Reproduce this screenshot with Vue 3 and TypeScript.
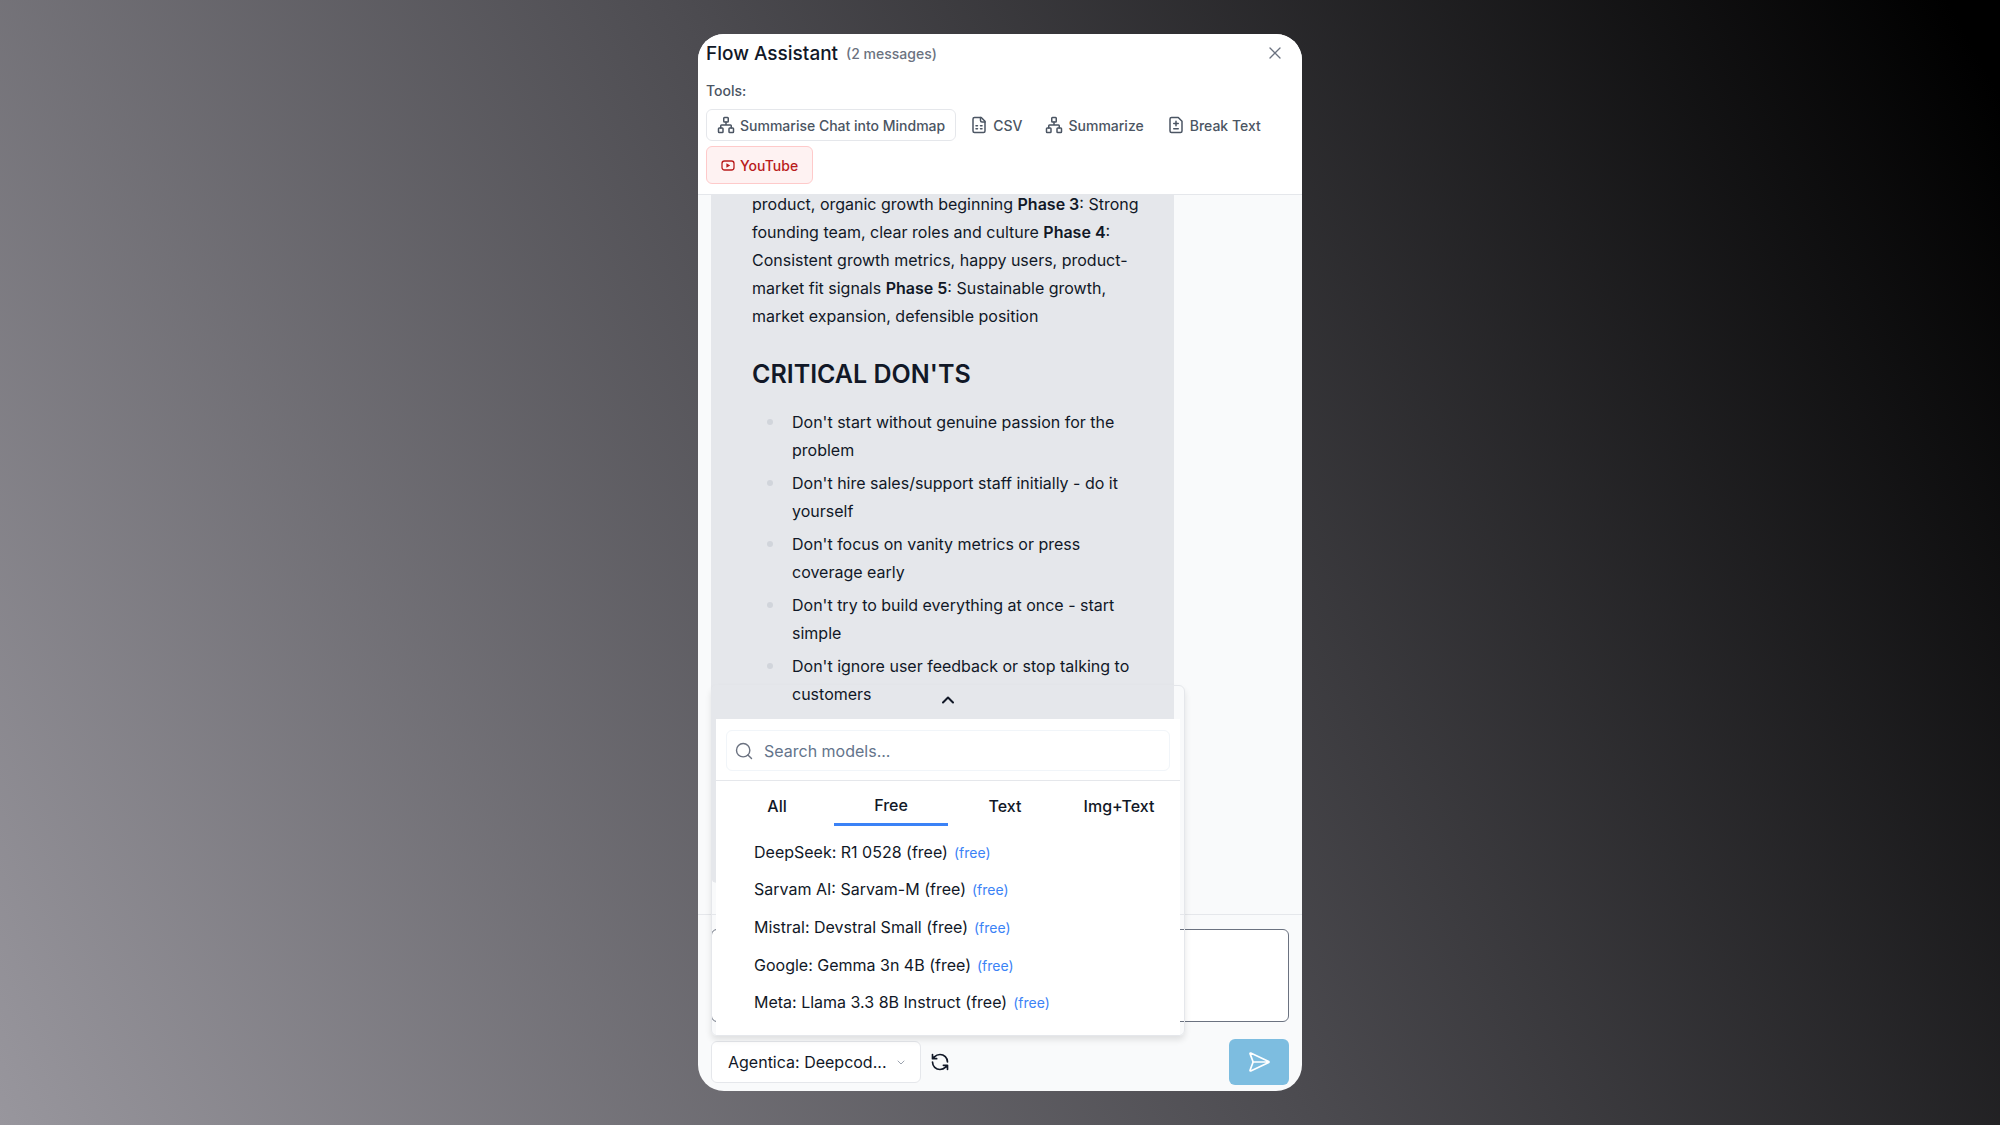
<script setup lang="ts">
import { ref } from 'vue'

interface Model {
  name: string
  tag: string
}

const tabs: string[] = ['All', 'Free', 'Text', 'Img+Text']
const activeTab = ref<string>('Free')
const search = ref<string>('')
const draft = ref<string>('')

const models: Model[] = [
  { name: 'DeepSeek: R1 0528 (free)', tag: '(free)' },
  { name: 'Sarvam AI: Sarvam-M (free)', tag: '(free)' },
  { name: 'Mistral: Devstral Small (free)', tag: '(free)' },
  { name: 'Google: Gemma 3n 4B (free)', tag: '(free)' },
  { name: 'Meta: Llama 3.3 8B Instruct (free)', tag: '(free)' },
]

const donts: string[] = [
  "Don't start without genuine passion for the problem",
  "Don't hire sales/support staff initially - do it yourself",
  "Don't focus on vanity metrics or press coverage early",
  "Don't try to build everything at once - start simple",
  "Don't ignore user feedback or stop talking to customers",
]
</script>

<template>
  <main class="stage">
    <section class="panel" aria-label="Flow Assistant">
      <header class="head">
        <div class="title-row">
          <h1>Flow Assistant</h1>
          <span class="count">(2 messages)</span>
          <button class="close" type="button" aria-label="Close">
            <svg viewBox="0 0 12 12" width="12" height="12"><path d="M1 1l10 10M11 1L1 11" /></svg>
          </button>
        </div>
        <p class="tools-label">Tools:</p>
        <div class="tools">
          <button class="tool outlined" type="button">
            <svg viewBox="0 0 24 24" width="18" height="18">
              <rect x="16" y="16" width="6" height="6" rx="1" /><rect x="2" y="16" width="6" height="6" rx="1" />
              <rect x="9" y="2" width="6" height="6" rx="1" />
              <path d="M5 16v-3a1 1 0 0 1 1-1h12a1 1 0 0 1 1 1v3M12 12V8" />
            </svg>
            Summarise Chat into Mindmap
          </button>
          <button class="tool" type="button">
            <svg viewBox="0 0 24 24" width="18" height="18">
              <path d="M15 2H6a2 2 0 0 0-2 2v16a2 2 0 0 0 2 2h12a2 2 0 0 0 2-2V7Z" />
              <path d="M14 2v4a2 2 0 0 0 2 2h4M8 13h2M14 13h2M8 17h2M14 17h2" />
            </svg>
            CSV
          </button>
          <button class="tool" type="button">
            <svg viewBox="0 0 24 24" width="18" height="18">
              <rect x="16" y="16" width="6" height="6" rx="1" /><rect x="2" y="16" width="6" height="6" rx="1" />
              <rect x="9" y="2" width="6" height="6" rx="1" />
              <path d="M5 16v-3a1 1 0 0 1 1-1h12a1 1 0 0 1 1 1v3M12 12V8" />
            </svg>
            Summarize
          </button>
          <button class="tool" type="button">
            <svg viewBox="0 0 24 24" width="18" height="18">
              <path d="M15 2H6a2 2 0 0 0-2 2v16a2 2 0 0 0 2 2h12a2 2 0 0 0 2-2V7Z" />
              <path d="M9 10h6M12 13V7M9 17h6" />
            </svg>
            Break Text
          </button>
          <button class="tool youtube" type="button">
            <svg viewBox="0 0 14 14" width="14" height="14">
              <rect x="1" y="3" width="12" height="9" rx="2.5" /><path class="solid" d="M5.4 5.2v4.6L9.2 7.5z" />
            </svg>
            YouTube
          </button>
        </div>
      </header>

      <div class="messages">
        <article class="bubble">
          <p>
            product, organic growth beginning <strong>Phase 3</strong>: Strong founding team, clear roles and culture
            <strong>Phase 4</strong>: Consistent growth metrics, happy users, product-market fit signals
            <strong>Phase 5</strong>: Sustainable growth, market expansion, defensible position
          </p>
          <h2>CRITICAL DON'TS</h2>
          <ul>
            <li v-for="item in donts" :key="item">{{ item }}</li>
          </ul>
        </article>
      </div>

      <footer class="composer">
        <textarea v-model="draft" aria-label="Message"></textarea>
        <div class="controls">
          <div class="picker">
            <select aria-label="Model">
              <option>Agentica: Deepcod...</option>
            </select>
            <svg viewBox="0 0 8 8" width="8" height="8"><path d="M1 3l3 3 3-3" /></svg>
          </div>
          <button class="refresh" type="button" aria-label="Refresh models">
            <svg viewBox="0 0 24 24" width="20" height="20">
              <path d="M21 12a9 9 0 0 0-9-9 9.75 9.75 0 0 0-6.74 2.74L3 8M3 3v5h5" />
              <path d="M3 12a9 9 0 0 0 9 9 9.75 9.75 0 0 0 6.74-2.74L21 16M16 16h5v5" />
            </svg>
          </button>
          <button class="send" type="button" aria-label="Send">
            <svg viewBox="0 0 24 24" width="24" height="24">
              <path d="M3.714 3.048a.498.498 0 0 0-.683.627l2.843 7.627a2 2 0 0 1 0 1.396l-2.842 7.627a.498.498 0 0 0 .682.627l18-8.5a.5.5 0 0 0 0-.904zM6 12h16" />
            </svg>
          </button>
        </div>

        <div class="menu">
          <button class="scroll-up" type="button" aria-label="Scroll up">
            <svg viewBox="0 0 12 8" width="12" height="8"><path d="M1 6.5l5-5 5 5" /></svg>
          </button>
          <div class="menu-body">
            <div class="search-wrap">
              <label class="search">
                <svg viewBox="0 0 24 24" width="20" height="20"><circle cx="11" cy="11" r="8" /><path d="M21 21l-4.3-4.3" /></svg>
                <input v-model="search" type="text" placeholder="Search models..." aria-label="Search models" />
              </label>
            </div>
            <div class="tabs" role="tablist">
              <button
                v-for="tab in tabs"
                :key="tab"
                type="button"
                role="tab"
                :aria-selected="tab === activeTab"
                :class="{ active: tab === activeTab }"
                @click="activeTab = tab"
              >{{ tab }}</button>
            </div>
            <ul class="models">
              <li v-for="model in models" :key="model.name">
                <button type="button">{{ model.name }}<span>{{ model.tag }}</span></button>
              </li>
            </ul>
          </div>
        </div>
      </footer>
    </section>
  </main>
</template>

<style>
body {
  margin: 0;
}
</style>

<style scoped>
* {
  box-sizing: border-box;
}
.stage {
  display: flex;
  justify-content: center;
  min-height: 100vh;
  padding: 34px 16px;
  background: linear-gradient(61deg, #98969d 0%, #4c4b50 50%, #000 98%);
  color: #111827;
  font-family: Inter, "Liberation Sans", sans-serif;
}
button,
input,
select,
textarea {
  margin: 0;
  padding: 0;
  border: 0;
  background: none;
  color: inherit;
  font: inherit;
}
svg {
  flex: none;
  fill: none;
  stroke: currentColor;
  stroke-width: 2;
  stroke-linecap: round;
  stroke-linejoin: round;
}
.panel {
  display: flex;
  flex-direction: column;
  width: 100%;
  max-width: 604px;
  border-radius: 26px;
  background: #f9fafb;
  overflow: hidden;
}
.head {
  padding: 7px 8px 10px;
  border-bottom: 1px solid #e5e7eb;
  background: #fff;
}
.title-row {
  display: flex;
  align-items: center;
  gap: 8px;
  height: 24px;
  padding-right: 12px;
}
h1 {
  margin: 0;
  font-size: 19px;
  font-weight: 500;
}
.count {
  color: #6b7280;
  font-size: 14px;
  font-weight: 500;
}
.close {
  display: flex;
  margin-left: auto;
  padding: 1px;
  color: #6b7280;
}
.close svg {
  stroke-width: 1.3;
}
.tools-label {
  margin: 15px 0 8px;
  color: #4b5563;
  font-size: 14px;
  font-weight: 500;
  line-height: 21px;
}
.tools {
  display: flex;
  flex-wrap: wrap;
  gap: 5px;
}
.tool {
  display: flex;
  align-items: center;
  gap: 5px;
  height: 32px;
  padding: 0 8px;
  border: 1px solid transparent;
  border-radius: 6px;
  color: #4b5563;
  font-size: 14px;
  font-weight: 500;
}
.outlined {
  padding: 0 10px;
  border-color: #e5e7eb;
}
.youtube {
  height: 38px;
  padding: 0 14px;
  border-color: #fecaca;
  background: #fef2f2;
  color: #b91c1c;
}
.youtube svg {
  stroke-width: 1.3;
}
.youtube .solid {
  fill: currentColor;
  stroke: none;
}
.messages {
  flex: 1;
  padding: 0 128px 31px 13px;
}
.bubble {
  display: flow-root;
  height: 100%;
  padding: 0 20px 0 41px;
  border-radius: 0 0 6px 6px;
  background: #e5e7eb;
  font-size: 16px;
  line-height: 28px;
}
.bubble p {
  margin: -5px 0 0;
}
strong {
  font-weight: 600;
}
h2 {
  margin: 28px 0 18px;
  font-size: 25px;
  font-weight: 600;
  line-height: 32px;
}
.bubble ul {
  display: flex;
  flex-direction: column;
  gap: 5px;
  margin: 0;
  padding: 0 0 0 15px;
}
.bubble li {
  display: flex;
  gap: 19px;
}
.bubble li::before {
  content: "";
  flex: none;
  width: 6px;
  height: 6px;
  margin-top: 11px;
  border-radius: 50%;
  background: #d1d5db;
}
.composer {
  position: relative;
  padding: 14px 13px 6px;
  border-top: 1px solid #e5e7eb;
}
textarea {
  display: block;
  width: 100%;
  height: 93px;
  border: 1px solid #6b7280;
  border-radius: 6px;
  background: #fff;
  resize: none;
}
.controls {
  display: flex;
  align-items: center;
  margin-top: 17px;
}
.picker {
  position: relative;
  display: flex;
  align-items: center;
}
select {
  width: 210px;
  height: 42px;
  padding: 0 16px;
  border: 1px solid #e5e7eb;
  border-radius: 6px;
  background: #fff;
  font-size: 16px;
  appearance: none;
}
.picker svg {
  position: absolute;
  right: 16px;
  color: #9ca3af;
  stroke-width: 1;
}
.refresh {
  display: flex;
  margin-left: 9px;
}
.send {
  display: flex;
  align-items: center;
  justify-content: center;
  width: 60px;
  height: 46px;
  margin-left: auto;
  border-radius: 6px;
  background: #7dbde0;
  color: #fff;
}
.send svg {
  stroke-width: 1.7;
}
.menu {
  position: absolute;
  bottom: 55px;
  left: 13px;
  width: 474px;
  border: 1px solid #e5e7eb;
  border-radius: 6px;
  box-shadow: 0 4px 6px rgba(0, 0, 0, 0.1);
}
.scroll-up {
  display: flex;
  align-items: center;
  justify-content: center;
  width: 100%;
  height: 33px;
  padding-bottom: 5px;
}
.menu-body {
  margin: 0 4px;
  padding-bottom: 14px;
  background: #fff;
  font-size: 16px;
}
.search-wrap {
  padding: 11px 10px 9px;
  border-bottom: 1px solid #e5e7eb;
}
.search {
  display: flex;
  align-items: center;
  gap: 10px;
  height: 41px;
  padding: 0 7px;
  border: 1px solid #f1f5f9;
  border-radius: 6px;
  color: #6b7280;
}
.search svg {
  stroke-width: 1.7;
}
.search input {
  flex: 1;
  min-width: 0;
  outline: 0;
}
.search input::placeholder {
  color: #64748b;
  opacity: 1;
}
.tabs {
  display: grid;
  grid-template-columns: repeat(4, 1fr);
  height: 45px;
  margin: 0 4px;
}
.tabs button {
  padding-top: 5px;
  font-weight: 500;
}
.tabs .active {
  border-bottom: 3px solid #3b82f6;
}
.models {
  display: grid;
  grid-auto-rows: 1fr;
  height: 188px;
  margin: 7px 0 0;
  padding: 0 0 0 38px;
  list-style: none;
}
.models li {
  display: flex;
  align-items: center;
}
.models span {
  margin-left: 6px;
  color: #3b82f6;
  font-size: 14px;
}
</style>
